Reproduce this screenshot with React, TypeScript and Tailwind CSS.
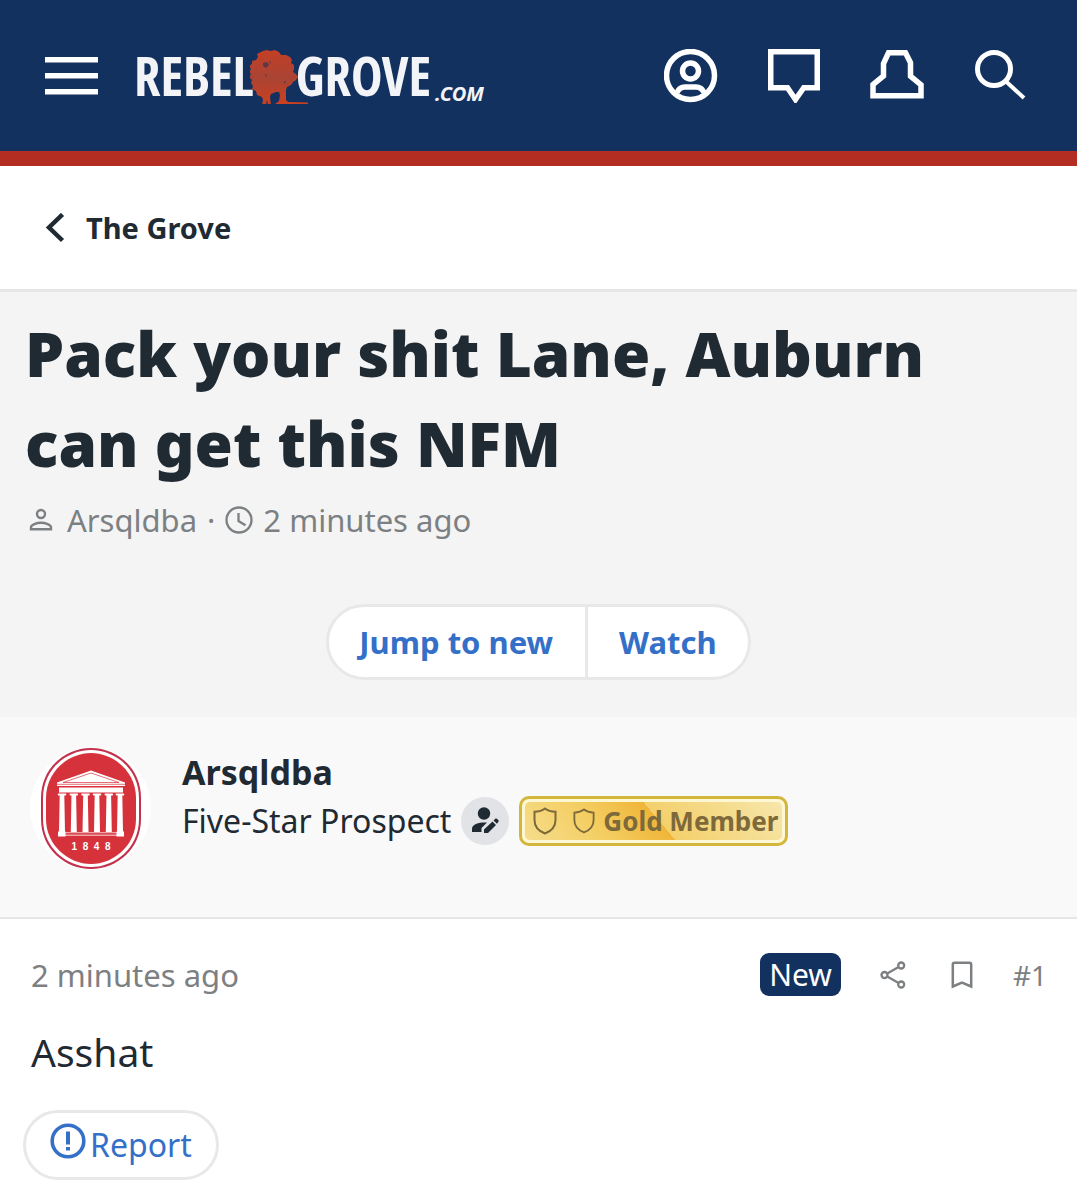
import type { ReactNode } from "react";

interface IIconProps {
  className?: string;
}

const AccountIcon = ({ className }: IIconProps) => (
  <svg viewBox="0 0 54 54" className={className} fill="none" stroke="currentColor" strokeWidth="5.5" aria-hidden="true">
    <circle cx="26.5" cy="26.5" r="24" />
    <circle cx="26.5" cy="22" r="8" />
    <path d="M13 43.500c2-4.500 4.500-5.500 8-5.500h11c3.500 0 6 1 8 5.500" />
  </svg>
);

const ChatIcon = ({ className }: IIconProps) => (
  <svg viewBox="0 0 54 54" className={className} fill="none" stroke="currentColor" strokeWidth="5.5" aria-hidden="true">
    <path d="M3.750 2.750h46.500v36h-13.500L28.500 50.500l-8-11.750H3.750z" />
  </svg>
);

const AlertIcon = ({ className }: IIconProps) => (
  <svg viewBox="0 0 54 54" className={className} fill="none" stroke="currentColor" strokeWidth="5.5" aria-hidden="true">
    <path d="M18.500 3.750h17l5 10v13.500l10.500 8.500v11H3V35.500l10.500-8.500V14.500z" />
  </svg>
);

const SearchIcon = ({ className }: IIconProps) => (
  <svg viewBox="0 0 54 54" className={className} fill="none" stroke="currentColor" aria-hidden="true">
    <circle cx="21" cy="20" r="16.500" strokeWidth="5" />
    <path d="M32.500 32L51 49" strokeWidth="4" />
  </svg>
);

const MenuIcon = ({ className }: IIconProps) => (
  <svg viewBox="0 0 54 38" className={className} fill="currentColor" aria-hidden="true">
    <path d="M0 0h53v5.500H0zM0 16h53v5.500H0zM0 32h53v5.500H0z" />
  </svg>
);

const TreeIcon = ({ className }: IIconProps) => (
  <svg viewBox="0 0 62 56" className={className} aria-hidden="true">
    <defs>
      <linearGradient id="leaf" x1="0" y1="0" x2="0" y2="1">
        <stop offset="0" stopColor="#c43f25" />
        <stop offset="0.500" stopColor="#a94434" />
        <stop offset="1" stopColor="#cc4020" />
      </linearGradient>
    </defs>
    <path
      fill="url(#leaf)"
      d="M13 3l4-1 3 1 5-1 4 2 2 3 5 0 4 2 2 3-1 3 3 2 0 4-1 3 3 2 2 3-2 3-3 2-2 3-4 2-1 3 0 10 2 2 20 .5v1.500l-28 .5-5-.5 4-3 1-6-1-3-3 0-5 2-1 3 1 8-3 0-1-5-1 5-4 0 1-5-1-3-5-2-1-4-4-2 1-3-2-3 1-3-3-3 2-3-2-2 2-3-2-3 3-2 0-3 4-1 2-3-1-3z"
    />
    <path fill="#12315f" opacity="0.550" d="M13 15l4-1 2 3-3 3-3-2zM19 13l2 1-1 2zM15 26l2 1-1 2zM34 33l2 1-2 2z" />
  </svg>
);

const UserIcon = ({ className }: IIconProps) => (
  <svg viewBox="0 0 24 24" className={className} fill="none" stroke="currentColor" strokeWidth="2.400" aria-hidden="true">
    <circle cx="12" cy="6" r="4" />
    <path d="M2 21.300v-2c0-2.500 5.500-4.600 10-4.600s10 2.100 10 4.600v2z" />
  </svg>
);

const ClockIcon = ({ className }: IIconProps) => (
  <svg viewBox="0 0 28 28" className={className} fill="none" stroke="currentColor" strokeWidth="2.300" aria-hidden="true">
    <circle cx="14" cy="14" r="12.500" />
    <path d="M13.500 7v8l7 4.200" />
  </svg>
);

const UserEditIcon = ({ className }: IIconProps) => (
  <svg viewBox="0 0 28 28" className={className} fill="currentColor" aria-hidden="true">
    <circle cx="13" cy="6.500" r="6.200" />
    <path d="M1 25v-3c0-4 5-6.500 12-6.500h3L10.500 21v4z" />
    <path d="M13 26v-3.500l8.500-8 3.500 3.500L17 26zM22.500 13.500l1.800-1.700c.6-.5 1.100-.4 1.600 0l1.500 1.500c.5.500.5 1 0 1.500L26 16.700z" />
  </svg>
);

const ShieldIcon = ({ className }: IIconProps) => (
  <svg viewBox="0 0 24 28" className={className} fill="none" stroke="currentColor" strokeWidth="2" aria-hidden="true">
    <path d="M12 1.500C9 3.800 5.500 4.600 1.500 4.800V13c0 7 4.500 11.200 10.500 13.500C18 24.200 22.500 20 22.500 13V4.800C18.500 4.600 15 3.800 12 1.500z" />
  </svg>
);

const ShareIcon = ({ className }: IIconProps) => (
  <svg viewBox="0 0 26 28" className={className} fill="none" stroke="currentColor" strokeWidth="2.300" aria-hidden="true">
    <circle cx="4.500" cy="14" r="3" />
    <circle cx="21.200" cy="4.500" r="3" />
    <circle cx="21.200" cy="23.500" r="3" />
    <path d="M7.200 12.500l11.400-6.500M7.200 15.500l11.400 6.500" />
  </svg>
);

const BookmarkIcon = ({ className }: IIconProps) => (
  <svg viewBox="0 0 22 28" className={className} fill="none" stroke="currentColor" strokeWidth="2.500" aria-hidden="true">
    <path d="M1.800 25.500V3.500c0-1 .6-1.700 1.700-1.700h15c1.100 0 1.700.7 1.700 1.700v22L11 21.500z" />
  </svg>
);

const ReportIcon = ({ className }: IIconProps) => (
  <svg viewBox="0 0 36 36" className={className} fill="none" stroke="currentColor" aria-hidden="true">
    <circle cx="18" cy="18" r="15.800" strokeWidth="3.600" />
    <path d="M18 8.500v13M18 24v3.500" strokeWidth="4" />
  </svg>
);

const columns = [17.5, 29.3, 41, 52.5, 64.3, 75.5];

const Seal = ({ className }: IIconProps) => (
  <svg viewBox="0 0 100 121" className={className} aria-hidden="true">
    <path fill="#c2324d" d="M0 50C0 20 24 0 50 0s50 20 50 50v21c0 30-24 50-50 50S0 101 0 71z" />
    <path fill="#fff" d="M2 50C2 21 26 2 50 2s48 19 48 48v21c0 29-24 48-48 48S2 100 2 71z" />
    <path fill="#d6323c" d="M5 50C5 24 27 5 50 5s45 19 45 45v21c0 26-22 45-45 45S5 97 5 71z" />
    <path fill="#fff" d="M50 22.500l34 12V38H16v-3.500z" />
    <path fill="none" stroke="#d6323c" strokeWidth="0.700" d="M22 34.500l28-9.500 28 9.500zM16 36.300h68" />
    <path fill="#fff" d="M18 39.500h64v5H18z" />
    {columns.map((x) => (
      <g key={x} fill="#fff">
        <rect x={x - 0.8} y="45.500" width="8.600" height="2" rx="1" />
        <path transform={`translate(${x} 47)`} d="M1.200 0h4.600l.7 37H.5z" />
      </g>
    ))}
    <path fill="#f0a5a9" d="M24 84h52v1.200H24zM24 86.500h52v1.500H24z" />
    <path fill="#fff" d="M17 83.500h7.500v5H17zM75.500 83.500H83v5h-7.500z" />
    <text x="50" y="102" textAnchor="middle" fill="#fff" className="font-['Liberation_Sans',sans-serif] text-[10px] font-bold">
      1&nbsp; 8&nbsp; 4&nbsp; 8
    </text>
  </svg>
);

const Logo = () => (
  <a href="#" aria-label="RebelGrove.com" className="flex items-center text-[#f3f4f8]">
    <span className="font-['Open_Sans_Condensed','Open_Sans',sans-serif] text-[53px] leading-[60px] font-bold">REBEL</span>
    <TreeIcon className="-mx-1 h-[56px] w-[62px] shrink-0" />
    <span className="z-10 -ml-3 font-['Open_Sans_Condensed','Open_Sans',sans-serif] text-[53px] leading-[60px] font-bold">
      GROVE
    </span>
    <span className="mt-9 ml-1 text-[20px] leading-6 font-bold italic">.COM</span>
  </a>
);

const NavButton = ({ label, children }: { label: string; children: ReactNode }) => (
  <button type="button" aria-label={label} className="h-[54px] w-[54px]">
    {children}
  </button>
);

const Header = () => (
  <header className="flex h-[166px] items-center justify-between border-b-[15px] border-[#b32d22] bg-[#12315f] pr-[50px] pl-[45px] text-white">
    <div className="flex items-center gap-[35px]">
      <button type="button" aria-label="Menu">
        <MenuIcon className="h-[38px] w-[54px]" />
      </button>
      <Logo />
    </div>
    <nav className="flex items-center gap-[49px]">
      <NavButton label="Account">
        <AccountIcon />
      </NavButton>
      <NavButton label="Conversations">
        <ChatIcon />
      </NavButton>
      <NavButton label="Alerts">
        <AlertIcon />
      </NavButton>
      <NavButton label="Search">
        <SearchIcon />
      </NavButton>
    </nav>
  </header>
);

const Breadcrumb = () => (
  <nav className="flex h-[126px] items-center border-b-[3px] border-[#e6e6e6] pl-[45px]">
    <a href="#" className="flex items-center gap-[21px] text-[29px] leading-10 font-bold">
      <svg viewBox="0 0 20 30" className="h-[30px] w-5" fill="none" stroke="currentColor" strokeWidth="4.500" aria-hidden="true">
        <path d="M17.500 1.500L4 14.500l13.500 13" />
      </svg>
      The Grove
    </a>
  </nav>
);

const ThreadHeader = () => (
  <section className="bg-[#f4f4f4] px-[25px] pt-4 pb-[37px]">
    <h1 className="max-w-[960px] text-[62px] leading-[90px] font-black">
      Pack your shit Lane, Auburn can get this NFM
    </h1>
    <div className="mt-[10px] flex items-center gap-[10px] pl-1 text-[31px] leading-[44px] text-[#7c8083]">
      <UserIcon className="mr-1 h-6 w-6" />
      <a href="#">Arsqldba</a>
      <span>·</span>
      <ClockIcon className="h-7 w-7" />
      <time>2 minutes ago</time>
    </div>
    <div className="mt-[62px] flex justify-center text-[31px] leading-[44px] font-bold text-[#3470c8]">
      <button type="button" className="h-[76px] rounded-l-full border-[3px] border-[#e8e8e8] bg-white pr-8 pl-[30px]">
        Jump to new
      </button>
      <button type="button" className="h-[76px] rounded-r-full border-[3px] border-l-0 border-[#e8e8e8] bg-white px-[31px]">
        Watch
      </button>
    </div>
  </section>
);

const GoldBadge = () => (
  <span className="flex h-[50px] items-center rounded-[10px] border-[3px] border-[#d2b73c] bg-[#fdf7d3] p-[3px]">
    <span className="flex h-full items-center rounded-[5px] bg-[linear-gradient(50deg,#f5dd8c_0%,#f4cd60_30%,#f0b538_52%,#f4d06c_52%,#f5dd90_80%,#f7e6ac_100%)] px-1 text-[26px] leading-8 font-bold text-[#7d693a]">
      <ShieldIcon className="mr-4 ml-1 h-7 w-6" />
      <ShieldIcon className="mr-2 h-[26px] w-[22px]" />
      Gold Member
    </span>
  </span>
);

const Author = () => (
  <section className="flex h-[202px] gap-[31px] border-b-2 border-[#e6e6e6] bg-[#f9f9f9] px-[30px] pt-[31px]">
    <a href="#" aria-label="Arsqldba" className="flex h-[121px] w-[121px] shrink-0 justify-center rounded-full bg-white">
      <Seal className="h-[121px] w-[100px]" />
    </a>
    <div>
      <a href="#" className="text-[34px] leading-[48px] font-bold">
        Arsqldba
      </a>
      <div className="flex items-center gap-[10px] text-[32px] leading-[44px] whitespace-nowrap">
        <span>Five-Star Prospect</span>
        <span className="flex h-12 w-12 items-center justify-center rounded-full bg-[#e2e3e7]">
          <UserEditIcon className="h-7 w-7" />
        </span>
        <GoldBadge />
      </div>
    </div>
  </section>
);

const Post = () => (
  <article className="pr-[30px] pl-[31px]">
    <div className="flex items-center justify-between pt-[34px] text-[31px] leading-[42px] text-[#7c8083]">
      <a href="#">
        <time>2 minutes ago</time>
      </a>
      <div className="flex items-center">
        <span className="rounded-[9px] bg-[#12315f] px-[9px] text-[30px] leading-[43px] text-white">New</span>
        <button type="button" aria-label="Share" className="ml-[39px]">
          <ShareIcon className="h-7 w-[26px]" />
        </button>
        <button type="button" aria-label="Bookmark" className="ml-[45px]">
          <BookmarkIcon className="h-7 w-[22px]" />
        </button>
        <a href="#" className="ml-10 text-[28px]">
          #1
        </a>
      </div>
    </div>
    <p className="mt-7 text-[39px] leading-[56px]">Asshat</p>
    <button
      type="button"
      className="mt-[30px] -ml-2 flex h-[70px] items-center gap-1 rounded-full border-[3px] border-[#e8e8e8] px-6 text-[32px] leading-[44px] text-[#3470c8]"
    >
      <ReportIcon className="mb-2 h-9 w-9" />
      Report
    </button>
  </article>
);

const App = () => {
  return (
    <div className="min-h-screen bg-white font-['Noto_Sans',sans-serif] text-[#1f2a33]">
      <Header />
      <Breadcrumb />
      <main>
        <ThreadHeader />
        <Author />
        <Post />
      </main>
    </div>
  );
};

export default App;
